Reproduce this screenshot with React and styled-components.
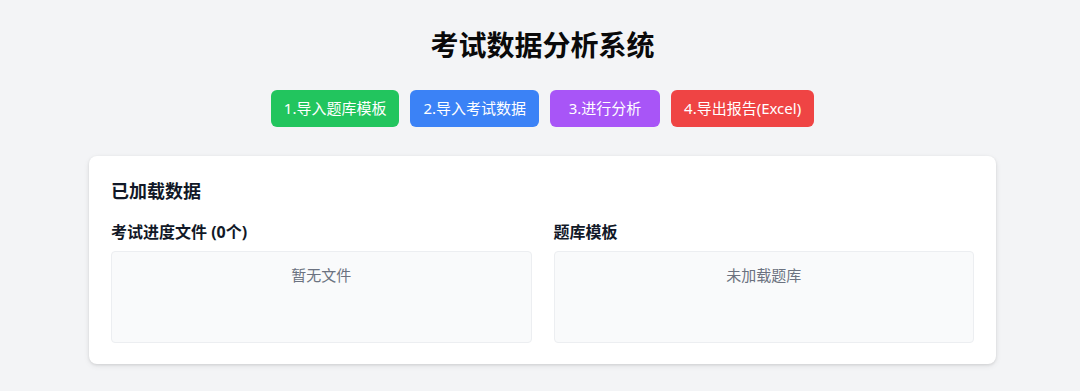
// Components==============
import React from "react";
import styled, { createGlobalStyle } from "styled-components";
// =========================

const GlobalStyle = createGlobalStyle`
  html, body {
    margin: 0;
    padding: 0;
    background: #f3f4f6;
  }
  body {
    font-family: "Noto Sans", "Noto Sans CJK SC", sans-serif;
    color: #111827;
  }
`;

const Page = styled.div`
  min-height: 391px;
  padding: 26px 0 27px 5px;
  box-sizing: border-box;
  display: flex;
  flex-direction: column;
  align-items: center;
`;

const Title = styled.h1`
  margin: 0;
  font-size: 28px;
  line-height: 38px;
  font-weight: 700;
  color: #0a0a0a;
`;

const Toolbar = styled.div`
  display: flex;
  gap: 11px;
  margin-top: 26px;
`;

const colors = {
  green: "#22c55e",
  blue: "#3b82f6",
  purple: "#a855f7",
  red: "#ef4444",
};

const ActionButton = styled.button`
  min-width: 110px;
  height: 37px;
  padding: 0 13px;
  border: none;
  border-radius: 6px;
  background: ${({ $color }) => colors[$color]};
  color: #fff;
  font-family: inherit;
  font-size: 15px;
  line-height: 37px;
  cursor: pointer;
`;

const Card = styled.section`
  width: 907px;
  box-sizing: border-box;
  margin-top: 29px;
  padding: 22px 22px 21px;
  background: #fff;
  border-radius: 8px;
  box-shadow: 0 1px 3px rgba(0, 0, 0, 0.1), 0 2px 6px rgba(0, 0, 0, 0.07);
`;

const CardTitle = styled.h2`
  margin: 0 0 15px;
  font-size: 18px;
  line-height: 27px;
  font-weight: 700;
`;

const Columns = styled.div`
  display: grid;
  grid-template-columns: 1fr 1fr;
  gap: 22px;
`;

const ColumnTitle = styled.h3`
  margin: 0 0 7px;
  font-size: 16px;
  line-height: 24px;
  font-weight: 700;
`;

const EmptyBox = styled.div`
  height: 92px;
  box-sizing: border-box;
  padding-top: 12px;
  background: #f9fafb;
  border: 1px solid #eceef1;
  border-radius: 4px;
  text-align: center;
  color: #6b7280;
  font-size: 15px;
  line-height: 22px;
`;

const actions = [
  { label: "1.导入题库模板", color: "green" },
  { label: "2.导入考试数据", color: "blue" },
  { label: "3.进行分析", color: "purple" },
  { label: "4.导出报告(Excel)", color: "red" },
];

export default function App() {
  const files = [];

  return (
    <>
      <GlobalStyle />
      <Page>
        <Title>考试数据分析系统</Title>
        <Toolbar>
          {actions.map((a) => (
            <ActionButton key={a.label} $color={a.color}>
              {a.label}
            </ActionButton>
          ))}
        </Toolbar>
        <Card>
          <CardTitle>已加载数据</CardTitle>
          <Columns>
            <div>
              <ColumnTitle>考试进度文件 ({files.length}个)</ColumnTitle>
              <EmptyBox>暂无文件</EmptyBox>
            </div>
            <div>
              <ColumnTitle>题库模板</ColumnTitle>
              <EmptyBox>未加载题库</EmptyBox>
            </div>
          </Columns>
        </Card>
      </Page>
    </>
  );
}
